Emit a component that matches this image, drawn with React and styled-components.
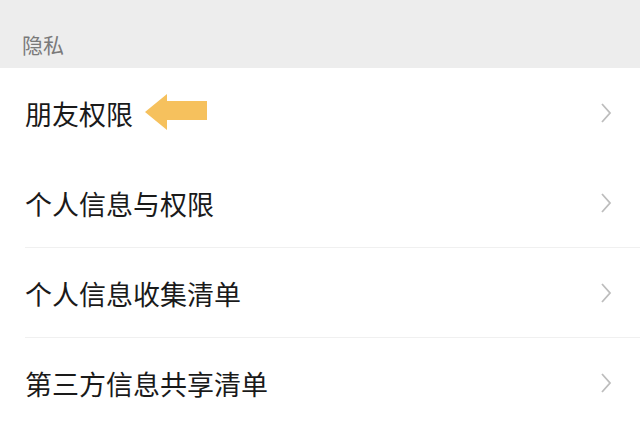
import styled, { createGlobalStyle } from "styled-components";

const GlobalStyle = createGlobalStyle`
  html, body {
    margin: 0;
    padding: 0;
    background: #ffffff;
  }
  body {
    font-family: "Noto Sans CJK SC", "Noto Sans", sans-serif;
  }
`;

const Page = styled.div`
  width: 640px;
  height: 426px;
  overflow: hidden;
  background: #ffffff;
`;

const SectionHeader = styled.div`
  height: 68px;
  background: #ededed;
  display: flex;
  align-items: flex-end;
  padding: 0 0 13px 22px;
  box-sizing: border-box;
  font-size: 21px;
  color: #7a7a7a;
  line-height: 1;
`;

const List = styled.div`
  display: flex;
  flex-direction: column;
`;

const Row = styled.div`
  height: 90px;
  display: flex;
  align-items: center;
  padding: 0 28px 0 25px;
  box-sizing: border-box;
  position: relative;
  &::after {
    content: "";
    display: ${(p) => (p.$divider ? "block" : "none")};
    position: absolute;
    left: 25px;
    right: 0;
    bottom: 0;
    height: 1px;
    background: #f0f0f0;
  }
`;

const Label = styled.div`
  flex: 1;
  display: flex;
  align-items: center;
  gap: 12px;
  font-size: 27px;
  color: #1a1a1a;
  line-height: 1;
`;

const Chevron = () => (
  <svg width="12" height="22" viewBox="0 0 12 22">
    <path d="M2 2 L10 11 L2 20" fill="none" stroke="#bdbdbd" strokeWidth="1.8" />
  </svg>
);

const Arrow = () => (
  <svg width="64" height="38" viewBox="0 0 64 38">
    <path d="M0 18 L22 0 L22 7 L62 7 L62 26 L22 26 L22 36 Z" fill="#f6c15d" />
  </svg>
);

const items = [
  { label: "朋友权限", arrow: true, divider: false },
  { label: "个人信息与权限", divider: true },
  { label: "个人信息收集清单", divider: true },
  { label: "第三方信息共享清单", divider: false },
];

export default function App() {
  return (
    <>
      <GlobalStyle />
      <Page>
        <SectionHeader>隐私</SectionHeader>
        <List>
          {items.map((it) => (
            <Row key={it.label} $divider={it.divider}>
              <Label>
                {it.label}
                {it.arrow && <Arrow />}
              </Label>
              <Chevron />
            </Row>
          ))}
        </List>
      </Page>
    </>
  );
}
